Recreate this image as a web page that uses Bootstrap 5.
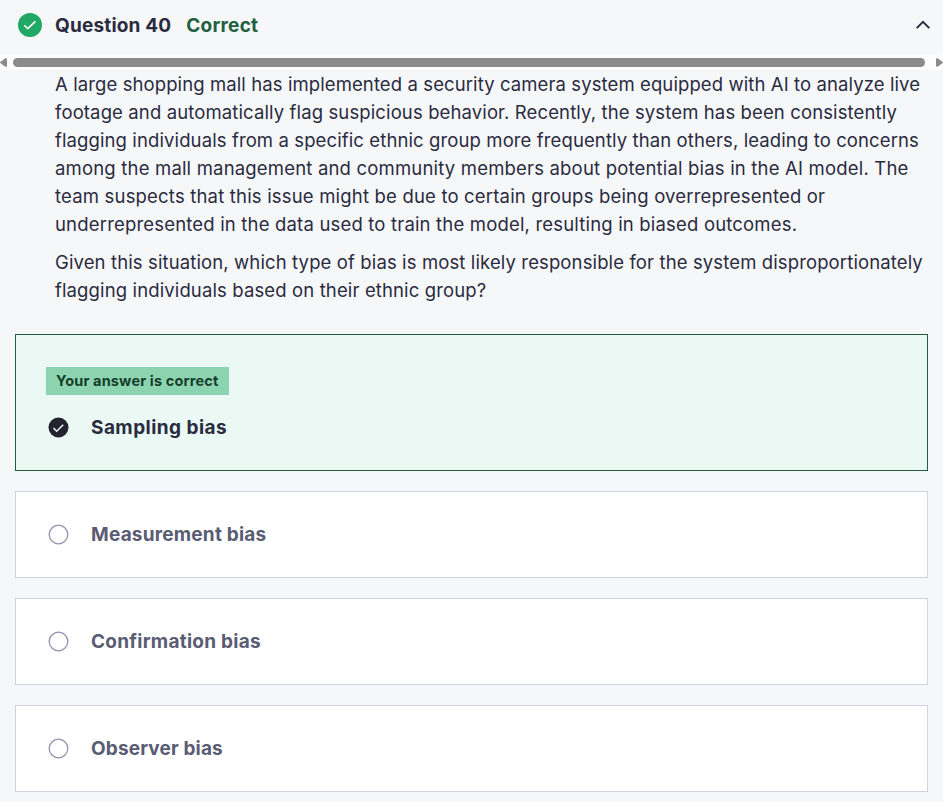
<!DOCTYPE html>
<html lang="en">
<head>
<meta charset="utf-8">
<meta name="viewport" content="width=device-width, initial-scale=1">
<title>Question 40</title>
<link href="https://cdn.jsdelivr.net/npm/bootstrap@5.3.0/dist/css/bootstrap.min.css" rel="stylesheet">
<style>
body{background:#f6f7f9;color:#2a2b3f;font-family:Inter,"Liberation Sans",sans-serif;font-size:18.5px;line-height:28px;height:802px;overflow:hidden}
.question-head{height:55px;padding:0 12px 5px 18px}
.question-title{font-size:19px;font-weight:700;line-height:28px;margin-left:13px;padding-top:1px;white-space:nowrap;letter-spacing:.18px}
.result{color:#206040;margin-left:15px;padding-top:1px;font-size:19px;font-weight:700;letter-spacing:.24px}
.scroll-track{height:15px;background:#fcfcfc}
.scroll-thumb{height:9px;border-radius:5px;background:#8b8b8b;margin:0 11px 0 6px}
.prompt{padding:0 0 0 55px;height:264px}
.prompt p{margin:0 0 10px}
.prompt span{display:block;white-space:nowrap;width:max-content}
.l1{letter-spacing:.1px}
.l2,.l7{letter-spacing:.122px}
.l3{letter-spacing:.112px}
.l4,.l5{letter-spacing:.185px}
.l6{letter-spacing:.18px}
.l8{letter-spacing:.13px}
.o1{letter-spacing:.45px;padding-top:2px}
.o2{letter-spacing:.21px}
.o3{letter-spacing:.26px}
.o4{letter-spacing:.14px}
.answers{padding:0 15px;gap:20px}
.answer{height:87px;border:1px solid #d1d2e0;background:#fff;color:#595c73;font-weight:700;font-size:19px;padding:0 32px}
.answer.is-correct{height:137px;border-color:#206040;background:#eaf9f4;color:#2a2b3f;padding-top:32px}
.verdict{background:#8cd4af;color:#153d2b;font-size:14.5px;letter-spacing:.16px;line-height:28px;height:28px;width:183px;margin:0 0 17px -2px;padding-left:10px;white-space:nowrap}
.answer svg{margin-right:22px}
</style>
<script src="https://cdn.jsdelivr.net/npm/bootstrap@5.3.0/dist/js/bootstrap.bundle.min.js"></script>
</head>
<body>
<header class="question-head d-flex align-items-center">
<svg class="flex-shrink-0" width="24" height="24" viewBox="0 0 24 24"><circle cx="12" cy="12" r="12" fill="#20a864"/><path d="M6.300 12.200l3.500 3.500 7.600-7.300" fill="none" stroke="#fff" stroke-width="1.600"/></svg>
<h1 class="question-title mb-0">Question 40</h1><div class="result">Correct</div>
<svg class="ms-auto" width="16" height="16" viewBox="0 0 16 16"><path d="M1.700 11.200L8 4.800l6.300 6.400" fill="none" stroke="#2a2b3f" stroke-width="1.900"/></svg>
</header>
<div class="scroll-track d-flex align-items-center">
<svg width="7" height="9" viewBox="0 0 7 9"><path d="M-.5 4.500L5.300.3Q7-.3 7 1.300v6.400Q7 9.300 5.300 8.700z" fill="#8b8b8b"/></svg>
<div class="scroll-thumb flex-grow-1"></div>
<svg width="7" height="9" viewBox="0 0 7 9"><path d="M7.500 4.500L1.700.3Q0-.3 0 1.300v6.400Q0 9.300 1.700 8.700z" fill="#8b8b8b"/></svg>
</div>
<main>
<section class="prompt">
<p><span class="l1">A large shopping mall has implemented a security camera system equipped with AI to analyze live</span>
<span class="l2">footage and automatically flag suspicious behavior. Recently, the system has been consistently</span>
<span class="l3">flagging individuals from a specific ethnic group more frequently than others, leading to concerns</span>
<span class="l4">among the mall management and community members about potential bias in the AI model. The</span>
<span class="l5">team suspects that this issue might be due to certain groups being overrepresented or</span>
<span class="l6">underrepresented in the data used to train the model, resulting in biased outcomes.</span></p>
<p><span class="l7">Given this situation, which type of bias is most likely responsible for the system disproportionately</span>
<span class="l8">flagging individuals based on their ethnic group?</span></p>
</section>
<section class="answers d-flex flex-column">
<div class="answer is-correct">
<div class="verdict"><span>Your answer is correct</span></div>
<div class="d-flex align-items-center"><svg width="21" height="21" viewBox="0 0 21 21"><circle cx="10.500" cy="10.500" r="10" fill="#22232f"/><path d="M5.500 11l3.200 3.200 6.500-6.500" fill="none" stroke="#eaf9f4" stroke-width="1.500"/></svg><span class="o1">Sampling bias</span></div>
</div>
<div class="answer d-flex align-items-center"><svg width="21" height="21" viewBox="0 0 21 21"><circle cx="10.500" cy="10.500" r="9.300" fill="none" stroke="#9194ac" stroke-width="1.300"/></svg><span class="o2">Measurement bias</span></div>
<div class="answer d-flex align-items-center"><svg width="21" height="21" viewBox="0 0 21 21"><circle cx="10.500" cy="10.500" r="9.300" fill="none" stroke="#9194ac" stroke-width="1.300"/></svg><span class="o3">Confirmation bias</span></div>
<div class="answer d-flex align-items-center"><svg width="21" height="21" viewBox="0 0 21 21"><circle cx="10.500" cy="10.500" r="9.300" fill="none" stroke="#9194ac" stroke-width="1.300"/></svg><span class="o4">Observer bias</span></div>
</section>
</main>
</body>
</html>
